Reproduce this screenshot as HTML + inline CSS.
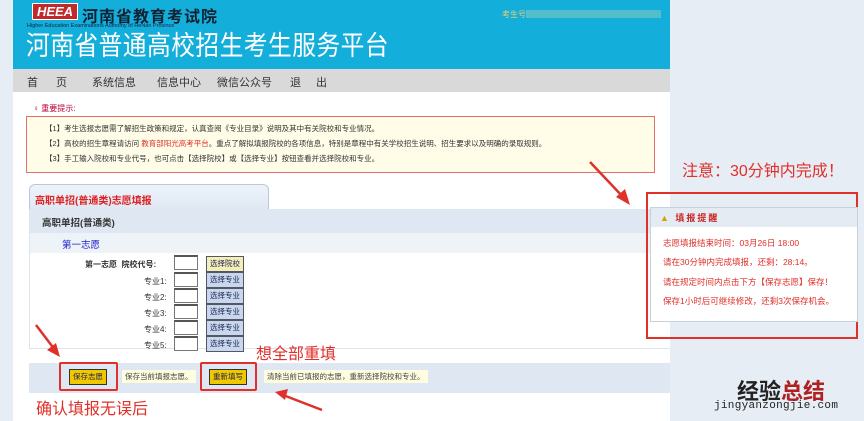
<!DOCTYPE html>
<html><head><meta charset="utf-8"><style>
*{margin:0;padding:0;box-sizing:border-box}
body{width:864px;height:421px;overflow:hidden;background:#e6edf5;font-family:"Liberation Sans","Noto Sans CJK SC",sans-serif;position:relative}
.a{position:absolute}
.main{left:13px;top:0;width:657px;height:421px;background:#fff}
.hdr{left:13px;top:0;width:657px;height:69px;background:#14aedb}
.nav{left:0;top:69px;width:670px;height:23px;font-size:11px;color:#333}
.nav span{position:absolute;top:5px}
.box{left:26px;top:116px;width:629px;height:57px;background:#fffde8;border:1px solid #e07070;font-size:7.5px;color:#333}
.box div{position:absolute;left:18px}
.btn{border:1px solid #556;font-size:7.5px;text-align:center;line-height:14px;color:#225}
.inp{border:1px solid #777;border-top:2px solid #555;background:#fff;width:24px;height:15px}
.red{color:#e0302a}
</style></head><body>
<div class="a main"></div>
<div class="a hdr"></div>
<div class="a" style="left:32px;top:3px;width:46px;height:17px;background:#c02a2a;color:#fff;font-weight:bold;font-size:13px;line-height:16px;font-style:italic;text-align:center;border:1px solid #fff">HEEA</div>
<div class="a" style="left:82px;top:3px;font-size:16px;font-weight:bold;color:#123;letter-spacing:1px">河南省教育考试院</div>
<div class="a" style="left:27px;top:23px;font-size:5.5px;color:#124">Higher Education Examinations Authority of HeNan Province</div>
<div class="a" style="left:26px;top:29px;font-size:27px;color:#fff;line-height:34px;transform:scaleX(0.88);transform-origin:0 0;white-space:nowrap;letter-spacing:0.5px">河南省普通高校招生考生服务平台</div>
<div class="a" style="left:502px;top:9px;font-size:8px;color:#e8d070">考生号:</div>
<div class="a" style="left:526px;top:10px;width:135px;height:8px;background:#6cc4c4;opacity:.7"></div>
<div class="a" style="left:13px;top:69px;width:657px;height:23px;background:#d9d9d9"></div>
<div class="a nav"><span style="left:27px">首</span><span style="left:56px">页</span><span style="left:92px">系统信息</span><span style="left:157px">信息中心</span><span style="left:217px">微信公众号</span><span style="left:290px">退</span><span style="left:316px">出</span></div>
<div class="a" style="left:33px;top:103px;font-size:8px;color:#b03">♀ 重要提示:</div>
<div class="a box">
<div style="top:6px">【1】考生选报志愿需了解招生政策和规定，认真查阅《专业目录》说明及其中有关院校和专业情况。</div>
<div style="top:21px">【2】高校的招生章程请访问 <span class="red">教育部阳光高考平台</span>。重点了解拟填报院校的各项信息，特别是章程中有关学校招生说明、招生要求以及明确的录取规则。</div>
<div style="top:36px">【3】手工输入院校和专业代号，也可点击【选择院校】或【选择专业】按钮查看并选择院校和专业。</div>
</div>
<div class="a" style="left:29px;top:184px;width:240px;height:25px;background:linear-gradient(#eef3fa,#dfe8f3);border:1px solid #b8c8dc;border-bottom:none;border-radius:6px 6px 0 0;font-size:10px;color:#d22;font-weight:bold;padding:7px 0 0 5px">高职单招(普通类)志愿填报</div>
<div class="a" style="left:29px;top:209px;width:641px;height:140px;border-left:1px solid #dde4ec;border-bottom:1px solid #dde4ec"></div>
<div class="a" style="left:30px;top:209px;width:640px;height:24px;background:#dfe8f2;font-size:9.5px;font-weight:bold;color:#333;padding:6px 0 0 12px">高职单招(普通类)</div>
<div class="a" style="left:30px;top:233px;width:640px;height:20px;background:#eef3f8;font-size:9.5px;color:#22c;padding:4px 0 0 32px">第一志愿</div>
<div class="a" style="left:85px;top:259px;font-size:8px;color:#333;font-weight:bold">第一志愿 &nbsp;院校代号:</div>
<div class="a inp" style="left:174px;top:255px"></div>
<div class="a btn" style="left:206px;top:256px;width:38px;background:#f2f0b8">选择院校</div>
<div class="a" style="left:144px;top:274px;font-size:8px;color:#333;line-height:16px">专业1:<br>专业2:<br>专业3:<br>专业4:<br>专业5:</div>
<div class="a inp" style="left:174px;top:272px"></div><div class="a inp" style="left:174px;top:288px"></div><div class="a inp" style="left:174px;top:304px"></div><div class="a inp" style="left:174px;top:320px"></div><div class="a inp" style="left:174px;top:336px"></div>
<div class="a btn" style="left:206px;top:272px;width:38px;background:#c8d8ec">选择专业</div>
<div class="a btn" style="left:206px;top:288px;width:38px;background:#c8d8ec">选择专业</div>
<div class="a btn" style="left:206px;top:304px;width:38px;background:#c8d8ec">选择专业</div>
<div class="a btn" style="left:206px;top:320px;width:38px;background:#c8d8ec">选择专业</div>
<div class="a btn" style="left:206px;top:336px;width:38px;background:#c8d8ec">选择专业</div>
<div class="a" style="left:29px;top:363px;width:641px;height:30px;background:#dfe8f2"></div>
<div class="a btn" style="left:69px;top:369px;width:38px;background:#f0c800;border-color:#333">保存志愿</div>
<div class="a" style="left:59px;top:362px;width:59px;height:29px;border:2px solid #e0302a;border-radius:2px"></div>
<div class="a" style="left:122px;top:370px;font-size:7.5px;color:#444;background:#fffde0;padding:1px 3px">保存当前填报志愿。</div>
<div class="a btn" style="left:209px;top:369px;width:38px;background:#f0c800;border-color:#333">重新填写</div>
<div class="a" style="left:200px;top:362px;width:57px;height:29px;border:2px solid #e0302a;border-radius:2px"></div>
<div class="a" style="left:264px;top:370px;font-size:7.5px;color:#444;background:#fffde0;padding:1px 3px">清除当前已填报的志愿，重新选择院校和专业。</div>
<div class="a" style="left:256px;top:340px;font-size:16px;color:#e0302a">想全部重填</div>
<div class="a" style="left:36px;top:395px;font-size:16px;color:#e0302a">确认填报无误后</div>
<div class="a" style="left:682px;top:157px;font-size:16px;color:#e0302a">注意：30分钟内完成！</div>
<div class="a" style="left:646px;top:192px;width:212px;height:147px;border:2px solid #e0302a"></div>
<div class="a" style="left:650px;top:207px;width:208px;height:115px;background:#fff;border:1px solid #c8d0d8"></div>
<div class="a" style="left:651px;top:208px;width:206px;height:19px;background:#e4ebf2;font-size:9px;font-weight:bold;color:#c22;padding:3px 0 0 9px;letter-spacing:2px"><span style="color:#d8a000">▲</span> 填报提醒</div>
<div class="a" style="left:663px;top:234px;font-size:8.5px;color:#e0302a;line-height:19.3px">志愿填报结束时间：03月26日 18:00<br>请在30分钟内完成填报，还剩：28:14。<br>请在规定时间内点击下方【保存志愿】保存！<br>保存1小时后可继续修改，还剩3次保存机会。</div>
<svg class="a" style="left:0;top:0" width="864" height="421">
<g stroke="#e0302a" stroke-width="2.5" fill="#e0302a">
<line x1="590" y1="162" x2="624" y2="198"/><polygon points="630,205 616,197 625,189" stroke="none"/>
<line x1="36" y1="325" x2="55" y2="350"/><polygon points="60,357 47,350 56,343" stroke="none"/>
<line x1="322" y1="410" x2="283" y2="395"/><polygon points="275,392 288,389 285,400" stroke="none"/>
</g></svg>
<div class="a" style="left:737px;top:374px;font-size:22px;font-weight:bold;color:#222">经验<span style="color:#b02020">总结</span></div>
<div class="a" style="left:714px;top:400px;font-size:11px;color:#222;font-family:'Liberation Mono',monospace;letter-spacing:0.3px">jingyanzongjie.com</div>
</body></html>
